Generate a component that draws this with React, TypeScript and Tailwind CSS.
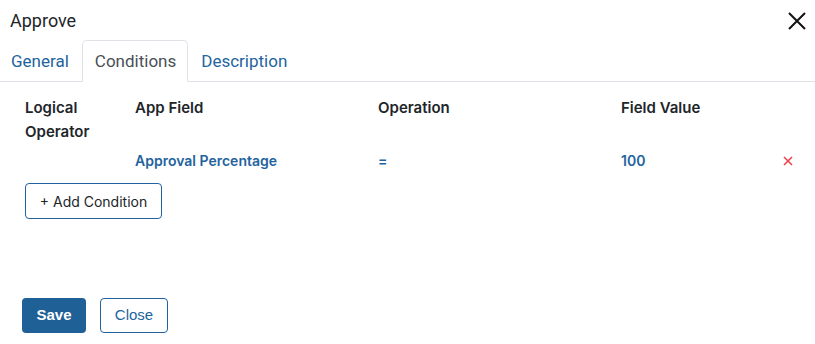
import { useState } from 'react';

const tabs = ['General', 'Conditions', 'Description'];

const App = () => {
  const [activeTab, setActiveTab] = useState('Conditions');

  return (
    <div className="w-[815px] h-[344px] bg-white flex flex-col overflow-hidden">
      {/* Header */}
      <div className="flex items-start justify-between pl-[10px] pr-[8px] pt-[8px] h-[40px]">
        <h2 className="text-[18px] leading-[26px] text-[#212529] font-['Roboto',sans-serif]">Approve</h2>
        <button className="mt-[3px] text-[#111]">
          <svg width="20" height="20" viewBox="0 0 20 20" fill="none" stroke="currentColor" strokeWidth="2">
            <path d="M2 2 L18 18 M18 2 L2 18" />
          </svg>
        </button>
      </div>

      {/* Tabs */}
      <div className="flex h-[42px] border-b border-[#dee2e6] font-['Roboto',sans-serif]">
        {tabs.map((tab) => (
          <button
            key={tab}
            onClick={() => setActiveTab(tab)}
            className={`pt-[2px] text-[17px] -mb-px rounded-t-[5px] border ${
              activeTab === tab
                ? 'border-[#dee2e6] border-b-white bg-white text-[#495057]'
                : 'border-transparent text-[#23639d]'
            } ${tab === 'General' ? 'pl-[10px] pr-[12px]' : 'pl-[12px] pr-[11px]'}`}
          >
            {tab}
          </button>
        ))}
      </div>

      {/* Conditions table */}
      <div className="pl-[25px] pt-[14px] font-['Inter',sans-serif]">
        <div className="grid grid-cols-[110px_243px_243px_162px_30px] leading-[24px] text-[15px] font-semibold text-[#212529]">
          <div>Logical<br />Operator</div>
          <div>App Field</div>
          <div>Operation</div>
          <div>Field Value</div>
          <div />
        </div>
        <div className="grid grid-cols-[110px_243px_243px_162px_30px] leading-[24px] mt-[5px] text-[14px] font-semibold text-[#23639d] items-center">
          <div />
          <div>Approval Percentage</div>
          <div>=</div>
          <div>100</div>
          <div className="flex">
            <svg width="10" height="10" viewBox="0 0 10 10" stroke="#f0434f" strokeWidth="1.6">
              <path d="M1 1 L9 9 M9 1 L1 9" />
            </svg>
          </div>
        </div>
        <button className="mt-[10px] h-[36px] w-[137px] border border-[#23639d] rounded-[4px] text-[14px] text-[#212529]">
          + Add Condition
        </button>
      </div>

      {/* Footer */}
      <div className="mt-auto flex gap-[14px] pl-[22px] pb-[11px] font-['Liberation_Sans',sans-serif] text-[15px]">
        <button className="h-[35px] w-[64px] rounded-[4px] bg-[#1f6097] text-white font-bold">Save</button>
        <button className="h-[35px] w-[68px] rounded-[4px] border border-[#23639d] text-[#23639d]">Close</button>
      </div>
    </div>
  );
};

export default App;
